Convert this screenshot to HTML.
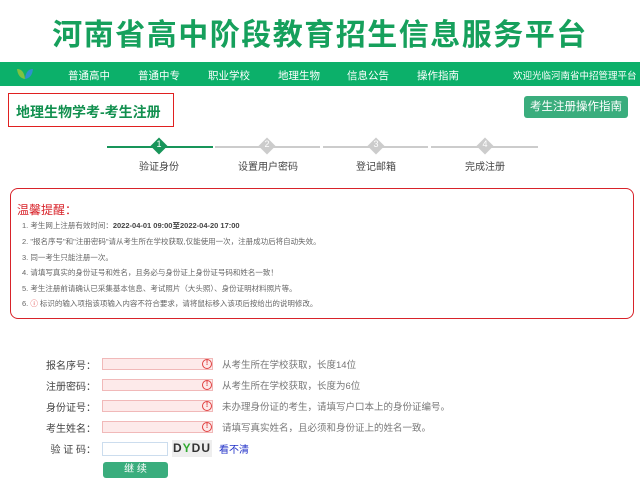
<!DOCTYPE html>
<html><head><meta charset="utf-8"><style>
*{margin:0;padding:0;box-sizing:border-box}
body{width:640px;height:484px;background:#fff;font-family:"Liberation Sans","Noto Sans CJK SC",sans-serif;position:relative;overflow:hidden;color:#555}
.a{position:absolute;white-space:nowrap}
.title{left:0;width:640px;top:10px;text-align:center;font-size:30px;font-weight:bold;color:#16a05c;letter-spacing:1.5px}
.nav{left:0;top:62px;width:640px;height:24px;background:#0cb06a}
.nav span{position:absolute;top:6px;font-size:10.5px;color:#fff}
.box1{left:8px;top:93px;width:166px;height:34px;border:1.5px solid #e02020}
.box1 b{position:absolute;left:7px;top:8px;font-size:14px;color:#12904f;font-weight:bold}
.btn{background:#3aad7d;color:#fff;border-radius:3px;text-align:center}
.line{height:2px;top:146px}
.dia{width:12px;height:12px;transform:rotate(45deg);top:140px;}
.dn{top:139px;width:14px;text-align:center;font-size:9px;color:#fff}
.lbl{top:158px;font-size:10px;color:#444;width:80px;text-align:center}
.warn{left:10px;top:188px;width:624px;height:131px;border:1.5px solid #d8232a;border-radius:8px}
.wl{left:22px;font-size:7.5px;color:#666}
.fl{left:40px;width:56px;text-align:right;font-size:10px;color:#444}
.in{left:102px;width:111px;height:12px;background:#fdeaea;border:1px solid #f1b9b9}
.ic{left:202px;width:10px;height:10px;border:1px solid #e04040;border-radius:50%;font-size:7px;color:#e04040;text-align:center;line-height:8px;font-weight:bold}
.h{left:222px;font-size:9.5px;color:#777}
</style></head><body>
<div class="a title">河南省高中阶段教育招生信息服务平台</div>
<div class="a nav">
<svg style="position:absolute;left:14px;top:3px" width="22" height="18"><path d="M3 4 Q10 4 11 14 Q4 13 3 4Z" fill="#7fc241"/><path d="M19 4 Q12 4 11 14 Q18 13 19 4Z" fill="#2f8fd0"/></svg>
<span style="left:68px">普通高中</span><span style="left:138px">普通中专</span><span style="left:208px">职业学校</span><span style="left:278px">地理生物</span><span style="left:347px">信息公告</span><span style="left:417px">操作指南</span><span style="left:513px;font-size:9.5px;top:6px">欢迎光临河南省中招管理平台</span>
</div>
<div class="a box1"><b>地理生物学考-考生注册</b></div>
<div class="a btn" style="left:524px;top:96px;width:104px;height:22px;font-size:11.5px;line-height:22px">考生注册操作指南</div>
<div class="a line" style="left:107px;width:106px;background:#18955a"></div>
<div class="a line" style="left:215px;width:105px;background:#ccc"></div>
<div class="a line" style="left:323px;width:105px;background:#ccc"></div>
<div class="a line" style="left:431px;width:107px;background:#ccc"></div>
<div class="a dia" style="left:153px;background:#18955a"></div><div class="a dn" style="left:152px">1</div>
<div class="a dia" style="left:261px;background:#ccc"></div><div class="a dn" style="left:260px">2</div>
<div class="a dia" style="left:370px;background:#ccc"></div><div class="a dn" style="left:369px">3</div>
<div class="a dia" style="left:479px;background:#ccc"></div><div class="a dn" style="left:478px">4</div>
<div class="a lbl" style="left:119px">验证身份</div>
<div class="a lbl" style="left:228px">设置用户密码</div>
<div class="a lbl" style="left:336px">登记邮箱</div>
<div class="a lbl" style="left:445px">完成注册</div>
<div class="a warn"></div>
<div class="a" style="left:17px;top:201px;font-size:12px;color:#d8232a">温馨提醒：</div>
<div class="a wl" style="top:220px">1. 考生网上注册有效时间：<b style="color:#444">2022-04-01 09:00至2022-04-20 17:00</b></div>
<div class="a wl" style="top:236px">2. "报名序号"和"注册密码"请从考生所在学校获取,仅能使用一次，注册成功后将自动失效。</div>
<div class="a wl" style="top:252px">3. 同一考生只能注册一次。</div>
<div class="a wl" style="top:267px">4. 请填写真实的身份证号和姓名，且务必与身份证上身份证号码和姓名一致！</div>
<div class="a wl" style="top:283px">5. 考生注册前请确认已采集基本信息、考试照片（大头照）、身份证明材料照片等。</div>
<div class="a wl" style="top:298px">6. <span style="color:#e04040">ⓘ</span> 标识的输入项指该项输入内容不符合要求，请将鼠标移入该项后按给出的说明修改。</div>
<div class="a fl" style="top:357px">报名序号：</div><div class="a in" style="top:358px"></div><div class="a ic" style="top:359px">!</div><div class="a h" style="top:357px">从考生所在学校获取，长度14位</div>
<div class="a fl" style="top:378px">注册密码：</div><div class="a in" style="top:379px"></div><div class="a ic" style="top:380px">!</div><div class="a h" style="top:378px">从考生所在学校获取，长度为6位</div>
<div class="a fl" style="top:399px">身份证号：</div><div class="a in" style="top:400px"></div><div class="a ic" style="top:401px">!</div><div class="a h" style="top:399px">未办理身份证的考生，请填写户口本上的身份证编号。</div>
<div class="a fl" style="top:420px">考生姓名：</div><div class="a in" style="top:421px"></div><div class="a ic" style="top:422px">!</div><div class="a h" style="top:420px">请填写真实姓名，且必须和身份证上的姓名一致。</div>
<div class="a fl" style="top:441px">验 证 码：</div>
<div class="a" style="left:102px;top:442px;width:66px;height:14px;border:1px solid #cde;background:#fff"></div>
<div class="a" style="left:172px;top:440px;width:40px;height:17px;background:#eee;font-size:12px;font-weight:bold;letter-spacing:1px;text-align:center;color:#333;line-height:17px">D<span style="color:#3a3">Y</span>DU</div>
<div class="a" style="left:219px;top:441px;font-size:10px;color:#2232c8">看不清</div>
<div class="a btn" style="left:103px;top:462px;width:65px;height:16px;font-size:10px;line-height:16px">继 续</div>
</body></html>
